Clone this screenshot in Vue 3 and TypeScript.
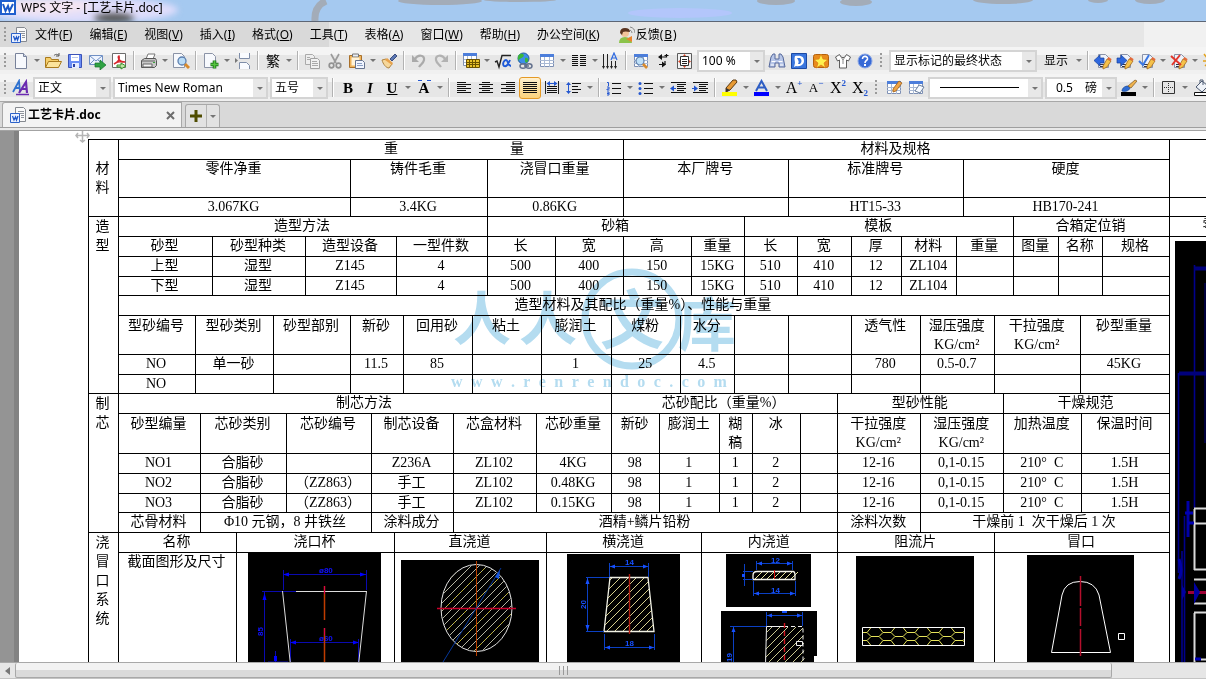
<script setup lang="ts">
import { ref } from 'vue'

interface Tool {
  kind: 'icon' | 'drop' | 'sep' | 'grip' | 'combo' | 'text'
  name?: string
  icon?: string
  text?: string
  cls?: string
  options?: string[]
}
interface Cell { text: string; span: number; rows?: number; cls?: string; art?: string[] }
interface Row { height: number; cells: Cell[] }

const icon = (name: string, key: string, cls = ''): Tool => ({ kind: 'icon', name, icon: key, cls })
const text = (name: string, value: string, cls = ''): Tool => ({ kind: 'text', name, text: value, cls })
const combo = (name: string, cls: string, ...options: string[]): Tool => ({ kind: 'combo', name, cls, options })
const drop: Tool = { kind: 'drop', name: '更多选项' }
const sep: Tool = { kind: 'sep' }
const grip: Tool = { kind: 'grip' }

const lines = (rows: [number, number][], y0: number, step: number, color = '#111') =>
  rows.map(([a, b], i) => `<path stroke="${color}" d="M${a} ${y0 + i * step}.5H${b}"/>`).join('')
const sheet = '<path d="M3.5 1.5h8l3 3v12h-11z" fill="#f7f9fd" stroke="#78829a"/><path d="M11.500 1.500v3h3" fill="#cdd6e8" stroke="#78829a"/>'
const gridArt = '<path d="M2.500 2.500h13v12h-13z" fill="#fff" stroke="#7e90b4"/><path d="M2 2h14v3H2z" fill="#4c7edb"/><path d="M2 8.500h14M2 11.500h14M6.500 5v10M11.500 5v10" stroke="#a9b9d4"/>'
const pencilNote = '<path d="M4.500 2.500h7l3 3v10h-10z" fill="#eef2fa" stroke="#8a93a8"/><path d="M6 12.500h5M6 14.500h4" stroke="#334"/><path d="M9 14l4-7 4 2-4 6-4 2z" fill="#f5c14a" stroke="#a46b1c" stroke-width=".8"/><path d="M13 7l4 2 .5-2-3-2z" fill="#e56a3a"/>'

const icons: Record<string, string> = {
  doc: '<path d="M6.500 1.500h8l2 2v12h-10z" fill="#fafafa" stroke="#85898f"/><path d="M9 5.500h6M9 7.500h6M12 9.500h3M12 11.500h3" stroke="#8f949c"/><path d="M1.500 7.500h9v9h-9z" fill="#eaf1ff" stroke="#2c62c9"/><path d="M3.500 10l1.500 4 1.500-3 1 3 1.500-4" fill="none" stroke="#1f57c8" stroke-width="1.300"/>',
  fresh: sheet,
  open: '<path d="M1.500 15V5.500h5l1 2h7V15z" fill="#f6cf6b" stroke="#a97a1d"/><path d="M1.500 15.500l3-6h13l-3 6z" fill="#fbe39b" stroke="#a97a1d"/><path d="M10 3.500c2-2 4-1 5 0M15 1v3h-3" fill="none" stroke="#555"/>',
  save: '<path d="M2.500 2.500h13v13h-13z" fill="#6a8df5" stroke="#3b52b8"/><path d="M5 3h8v6H5z" fill="#fff"/><path d="M6 5.500h6" stroke="#b8c6ea"/><path d="M6 11h7v5H6z" fill="#e6ecff"/><path d="M7 12h2v3H7z" fill="#2a3f9f"/>',
  mail: '<path d="M1.500 3.500h13v9h-13z" fill="#eef4ff" stroke="#6f8fc4"/><path d="M2 4l6 5 6-5M2 12l4-4M14 12l-4-4" fill="none" stroke="#6f8fc4"/><path d="M7 11h5V8l6 5-6 5v-3H7z" fill="#2fa243" stroke="#16722a" stroke-width=".7"/>',
  pdf: '<path d="M2.500 1.500h13v14h-13z" fill="#fff" stroke="#6c6c6c"/><path d="M4 12c4-2 6-5 5-8-2 0 0 7 6 6-4-1-8 0-11 2z" fill="none" stroke="#d8262c" stroke-width="1.500"/><path d="M7 13h4v-2l5 3-5 3v-2H7z" fill="#bfe6a5" stroke="#398b2b"/>',
  print: '<path d="M6 7l2-5h7l-2 5z" fill="#fff" stroke="#777"/><path d="M1.500 8.500l3-2h11l1 2v5l-2 2h-13z" fill="#c6c6c6" stroke="#555"/><path d="M2 9h13M3 12h9v3H3z" fill="#f4f4f4" stroke="#666"/><path d="M13 10h2v1h-2z" fill="#3aa23a"/>',
  preview: '<path d="M1.500 1.500h8l3 3v11h-11z" fill="#f7f9fd" stroke="#8b93a6"/><circle cx="10" cy="9" r="4" fill="#b9dcf7" stroke="#5d7fae" stroke-width="1.300"/><path d="M13 12l4 4" stroke="#d88a2c" stroke-width="3"/>',
  plus: '<path d="M2.500 1.500h8l3 3v11h-11z" fill="#f7f9fd" stroke="#8b93a6"/><path d="M8.500 12.500h8M12.500 8.500v8" stroke="#1f7d1c" stroke-width="3.600"/><path d="M9 12.500h7M12.500 9v7" stroke="#55c33f" stroke-width="1.600"/>',
  brk: '<path d="M5.500 1v5.500h10V1M5.500 17v-6.500h7l3 3V17" fill="#f9fbff" stroke="#7e8da8"/><path d="M1 6l3 2.500L1 11z" fill="#777"/>',
  copy: '<path d="M1.500 2.500h7l2 2v8h-9z" fill="#eee" stroke="#aaa"/><path d="M6.500 6.500h7l2 2v8h-9z" fill="#f2f2f2" stroke="#a2a2a2"/><path d="M8 9.500h5M8 11.500h6M8 13.500h6M3 5.500h3M3 7.500h3" stroke="#aaa"/>',
  cut: '<path d="M5 2l5 9M13 2l-5 9" stroke="#9b9b9b" stroke-width="1.700"/><circle cx="5.500" cy="13.500" r="2.300" fill="none" stroke="#929292" stroke-width="1.700"/><circle cx="12.500" cy="13.500" r="2.300" fill="none" stroke="#929292" stroke-width="1.700"/>',
  paste: '<path d="M1.500 3.500h12v12h-12z" fill="#efb45c" stroke="#a9702a"/><path d="M4.500 2h6v3h-6z" fill="#e9edf4" stroke="#777"/><path d="M3.500 5.500h8v8h-8z" fill="#fff3d9"/><path d="M7.500 8.500h7l2 2v6h-9z" fill="#f2f6ff" stroke="#66748f"/><path d="M9 11.500h5M9 13.500h6" stroke="#8ca0c4"/>',
  brush: '<path d="M10 7l5-5 2 2-5 5z" fill="#5b77b4" stroke="#3c4f80"/><path d="M2 8l4-1 6 5-3 4c-3 0-6-4-7-8z" fill="#f6d79a" stroke="#ad8444"/><path d="M7 6l6 5-1 2-7-5z" fill="#e8a24b"/>',
  undo: '<path d="M5 7c3-5 10-4 9 1-.5 3-3 4-5 7" fill="none" stroke="#aaa" stroke-width="2.200"/><path d="M2 3v7h7z" fill="#aaa"/>',
  redo: '<path d="M13 7C10 2 3 3 4 8c.5 3 3 4 5 7" fill="none" stroke="#b2b2b2" stroke-width="2.200"/><path d="M16 3v7H9z" fill="#b2b2b2"/>',
  tgreen: '<path d="M1.500 1.500h13v12h-13z" fill="#fff" stroke="#7e90b4"/><path d="M1 1h14v3H1z" fill="#4c7edb"/><path d="M2 7.500h12M2 10.500h12M5.500 4v9M9.500 4v9" stroke="#a9b9d4"/><path d="M4.500 7.500h13v8h-13z" fill="#e9c22b" stroke="#6b5200"/><path d="M5 10.500h12M5 12.500h12M7.500 8v7M10.500 8v7M13.500 8v7" stroke="#6b5200"/>',
  sqrt: '<path d="M1 10l2-1 2 6L8 3.500h9" fill="none" stroke="#222" stroke-width="1.400"/><path d="M16 8c-2 5-4 7-6 6-2-2 0-6 2-6s2 6 5 6" fill="none" stroke="#1d59d8" stroke-width="1.900"/>',
  globe: '<circle cx="7.500" cy="6.500" r="5.500" fill="#3d8ee8" stroke="#1d5aa0"/><path d="M4 2c3-1 5 1 3 3s-4 1-4 4c-2-3-1-6 1-7zM9 6c2-1 4 1 3 3s-3 2-3 0z" fill="#3ab53a"/><path d="M4 14c0-3 6-3 6 0s-6 3-6 0M10 14c0-3 6-3 6 0s-6 3-6 0M8 14h5" fill="none" stroke="#63718d" stroke-width="1.500"/>',
  grid: gridArt,
  columns: lines([[2, 8], [2, 8], [2, 8], [2, 8], [2, 8], [2, 8]], 3, 2) + lines([[10, 16], [10, 16], [10, 16], [10, 16], [10, 16], [10, 16]], 3, 2),
  textdir: '<path d="M1.500 2v14M5.500 2v14M9.500 9v7M13.500 9v7" stroke="#222"/><path d="M0 14h3l-1.500 3zM4 14h3l-1.500 3zM8 14h3l-1.500 3zM12 14h3l-1.500 3z" fill="#222"/><path d="M9 8l3-7 3 7M10 6h4" fill="none" stroke="#2f6ae0" stroke-width="1.200"/>',
  find: gridArt + '<circle cx="8" cy="9" r="4" fill="#bfe0f8" stroke="#5d7fae" stroke-width="1.200"/><path d="M11 12l4 4" stroke="#d88a2c" stroke-width="2.600"/>',
  para: '<path d="M12.500 2v3h-6M5 12.500h6V9" fill="none" stroke="#111" stroke-width="1.200"/><path d="M8 2v6L4 5zM8 9.500v6l4-3zM10.500 3h4v1h-4z" fill="#111"/>',
  page: '<path d="M1.500 1.500h14v15h-14z" fill="#f3f3f3" stroke="#5c5c5c"/><path d="M4.500 4.500h8v9h-8z" fill="#fff" stroke="#333"/><path d="M6 7.500h5M6 9.500h5M6 11.500h5" stroke="#222"/><path d="M7 4l1.500-2L10 4zM7 14l1.500 2 1.500-2zM4 8L2 9.500 4 11zM13 8l2 1.500L13 11z" fill="#d84a2c"/>',
  bino: '<path d="M3 5l2-3h2v5h4V2h2l2 3 2 10h-6v-4H7v4H1z" fill="#b7c6e8" stroke="#56699b"/><path d="M3.500 9.500h4M10.500 9.500h4M3 13h3M12 13h3" stroke="#fff"/>',
  dee: '<path d="M1.500 1.500h15v15h-15z" fill="#3a76de" stroke="#1c4aa4"/><path d="M5 4c8-1 9 2 9 5s-3 6-8 5l-2 1 1-4c0-3-1-3 0-7z" fill="#fff"/><path d="M7 6h3c2 2 2 4 0 6H8c1-2 1-3-1-6z" fill="#3a76de"/>',
  star: '<rect x="1.500" y="2.500" width="15" height="13" rx="2" fill="#e98b1d" stroke="#b3610c"/><path d="M9 2l2 5 5 .5-4 3.500 1.500 5L9 13l-4.500 3L6 11 2 7.500 7 7z" fill="#fff04d" stroke="#d87a12" stroke-width=".7"/>',
  shirt: '<path d="M5.500 2.500L1.500 5l2 4 2-1v8h7V8l2 1 2-4-4-2.500-2 3h-3z" fill="#fff" stroke="#5e5e5e"/><path d="M5.500 2.500L9 8l3.500-5.500M9 8v4" fill="none" stroke="#8a8a8a"/>',
  help: '<circle cx="9" cy="9" r="7" fill="#3769d6" stroke="#8ba7e6"/><path d="M6.500 7c0-4 5.500-3 5 0-.3 1.500-2.500 1.500-2.500 4" fill="none" stroke="#fff" stroke-width="1.600"/><path d="M8 12h2v2H8z" fill="#fff"/>',
  prev: pencilNote + '<path d="M6 3v3h4v5H6v3L0 8.500z" fill="#2e67de" stroke="#16409c" stroke-width=".7"/>',
  next: pencilNote + '<path d="M5 3v3H1v5h4v3l6-5.500z" fill="#2e67de" stroke="#16409c" stroke-width=".7"/>',
  accept: pencilNote + '<path d="M1 9l4 4 6-10" fill="none" stroke="#3b78e4" stroke-width="2"/>',
  reject: pencilNote + '<path d="M1 4l10 9M10 3L2 13" stroke="#e3362c" stroke-width="2"/>',
  spark: '<path d="M2 2l4 5M9 1v5M1 9h5M3 14l3-3" stroke="#e3a21c" stroke-width="1.500"/><path d="M7 7h10v9H7z" fill="#f3c866" stroke="#a46b1c"/>',
  styles: '<path d="M1 13L7 2l1 11M3 9h5" fill="none" stroke="#2f72cf" stroke-width="1.800"/><path d="M7 14L14 3l1 11M10 10h5" fill="none" stroke="#6b2bb1" stroke-width="2.200"/><path d="M4 15.500h13" stroke="#6b2bb1" stroke-width="1.500"/>',
  left: lines([[2, 11], [2, 16], [2, 11], [2, 16], [2, 11], [2, 16]], 3, 2),
  center: lines([[5, 13], [2, 16], [5, 13], [2, 16], [5, 13], [2, 16]], 3, 2),
  right: lines([[7, 16], [2, 16], [7, 16], [2, 16], [7, 16], [2, 16]], 3, 2),
  justify: lines([[2, 16], [2, 16], [2, 16], [2, 16], [2, 16], [2, 16]], 3, 2),
  spread: lines([[4, 14], [4, 14], [4, 14], [4, 14]], 7, 2) + '<path d="M2.500 2v13M15.500 2v13" stroke="#222"/><path d="M4 4.500h10" stroke="#2457d0"/><path d="M7 2v5L3.500 4.500zM11 2v5l3.500-2.500z" fill="#2457d0"/>',
  spacing: lines([[7, 16], [7, 13], [7, 16], [7, 13]], 4, 3) + '<path d="M3.500 5v8" stroke="#2457d0"/><path d="M1 6l2.500-3L6 6zM1 12l2.500 3L6 12z" fill="#2457d0"/>',
  numbers: lines([[7, 16], [7, 16], [7, 16]], 4, 5) + '<path d="M2 3.500h1.500V7M2 8h2v2H2v1h2.500M2 13h2v3H2M2 14.500h2" fill="none" stroke="#2457d0"/>',
  bullets: lines([[7, 16], [7, 16], [7, 16]], 4, 5) + '<circle cx="3" cy="4.500" r="1.500" fill="#2457d0"/><circle cx="3" cy="9.500" r="1.500" fill="#2457d0"/><circle cx="3" cy="14.500" r="1.500" fill="#2457d0"/>',
  outdent: lines([[2, 17], [8, 17], [8, 15], [8, 17], [8, 15], [2, 17]], 3, 2) + '<path d="M2 9.500h5" stroke="#2457d0"/><path d="M5 6.500v6l-4-3z" fill="#2457d0"/>',
  indent: lines([[2, 17], [8, 17], [8, 15], [8, 17], [8, 15], [2, 17]], 3, 2) + '<path d="M1 9.500h4" stroke="#2457d0"/><path d="M3 6.500v6l4-3z" fill="#2457d0"/>',
  marker: '<path d="M5 9l7-8h3l1 2-7 8-4 2z" fill="#e79a34" stroke="#5c3a12"/><path d="M5 9l4 2-4 2z" fill="#333"/><path d="M1 13h15v4H1z" fill="#ffff00"/>',
  color: '<path d="M3 12L8.500 2 14 12M5 8.500h7" fill="none" stroke="#2e5ec4" stroke-width="2"/><path d="M1 13h15v4H1z" fill="#0000ff"/>',
  drawtable: gridArt + '<path d="M8 10l6-8 3 2-6 8-3 1z" fill="#f0a445" stroke="#9c5d17" stroke-width=".8"/>',
  erase: gridArt + '<path d="M8 12l4-6 5 2-4 6z" fill="#f7fbff" stroke="#6c7f9e"/>',
  pen: '<path d="M2 12c0-3 3-5 6-5l2 2c-1 3-5 4-8 3z" fill="#2e6cd3" stroke="#194690" stroke-width=".7"/><path d="M8 7l7-6 2 1-6 7z" fill="#f0b34d" stroke="#7a5420" stroke-width=".7"/><path d="M1 13h15v4H1z" fill="#000"/>',
  borders: '<path d="M2.500 2.500h12v12h-12z" fill="none" stroke="#333"/><path d="M8.500 4v9M4 8.500h9" stroke="#333" stroke-dasharray="1 1"/>',
  bucket: '<path d="M4 8l6-6 6 5-6 6z" fill="#eef2f8" stroke="#4d5a72"/><path d="M8 4V1h3v5" fill="none" stroke="#4d5a72"/><path d="M2.500 13.500h14v3h-14z" fill="#fff" stroke="#111"/>'
}

const standard: Tool[] = [
  grip, icon('新建', 'fresh'), drop, icon('打开', 'open'), icon('保存', 'save'), icon('发送邮件', 'mail'), icon('输出为 PDF', 'pdf'), sep,
  icon('打印', 'print'), drop, icon('打印预览', 'preview'), sep, icon('新建页', 'plus'), drop, icon('分页', 'brk'), sep,
  text('繁体转换', '繁', 'fan'), drop, sep, icon('复制', 'copy'), icon('剪切', 'cut'), icon('粘贴', 'paste'), drop, icon('格式刷', 'brush'), sep,
  icon('撤销', 'undo'), icon('恢复', 'redo'), sep, icon('表格', 'tgreen'), drop, icon('公式', 'sqrt'), icon('超链接', 'globe'), icon('插入表格', 'grid'), drop,
  icon('分栏', 'columns'), drop, icon('文字方向', 'textdir'), sep, icon('查找表格', 'find'), icon('段落标记', 'para'), icon('页面', 'page'),
  combo('显示比例', 'w70', '100 %', '75 %', '150 %'), icon('查找', 'bino'), icon('文档', 'dee'), icon('收藏', 'star'), icon('皮肤', 'shirt'), icon('帮助', 'help'),
  { ...grip, cls: 'wide' }, combo('修订显示', 'w150', '显示标记的最终状态', '最终状态', '原始状态'), text('显示', '显示', 'show'), drop, sep,
  icon('前一处修订', 'prev'), icon('后一处修订', 'next'), icon('接受修订', 'accept'), drop, icon('拒绝修订', 'reject'), drop, icon('新批注', 'spark')
]
const formatting: Tool[] = [
  grip, icon('样式', 'styles'), combo('样式名', 'w80', '正文', '标题 1'), combo('字体', 'w157', 'Times New Roman', 'Arial'), combo('字号', 'w60', '五号', '四号'), sep,
  text('加粗', 'B', 'bold'), text('倾斜', 'I', 'ital'), text('下划线', 'U', 'under'), drop, text('字符间距', 'A', 'spaced'), drop, sep,
  icon('左对齐', 'left'), icon('居中', 'center'), icon('右对齐', 'right'), icon('两端对齐', 'justify', 'active'), icon('分散对齐', 'spread'), icon('行距', 'spacing'), drop, sep,
  icon('编号', 'numbers'), drop, icon('项目符号', 'bullets'), drop, icon('减少缩进', 'outdent'), icon('增加缩进', 'indent'), sep,
  icon('突出显示', 'marker'), drop, icon('字体颜色', 'color'), drop, text('增大字号', 'A<sup>+</sup>', 'serif'), text('减小字号', 'A<sup>−</sup>', 'serif small'),
  text('上标', 'X<sup>2</sup>', 'serif'), text('下标', 'X<sub>2</sub>', 'serif'), { ...grip, cls: 'wide' }, icon('绘制表格', 'drawtable'), icon('擦除', 'erase'),
  combo('线型', 'w117 line', ''), combo('线宽', 'w74 right', '0.5\u3000磅', '1\u3000磅'), icon('边框颜色', 'pen'), drop, sep, icon('边框', 'borders'), drop, icon('底纹', 'bucket')
]
const menus: [string, string][] = [['文件', 'F'], ['编辑', 'E'], ['视图', 'V'], ['插入', 'I'], ['格式', 'O'], ['工具', 'T'], ['表格', 'A'], ['窗口', 'W'], ['帮助', 'H'], ['办公空间', 'K']]

const LEFT = 88, BODY = 118, RIGHT = 1168, END = 1290
const eMat = [350, 487, 623, 788, 963, RIGHT]
const eMold = [212, 305, 396, 487, 555, 623, 691, 744, 797, 851, 901, 956, 1013, 1058, 1102, RIGHT]
const eSand = [195, 273, 350, 403, 472, 541, 611, 680, 734, 788, 851, 920, 994, 1080, RIGHT]
const eCore = [200, 286, 371, 453, 536, 611, 659, 719, 752, 800, 837, 920, 1003, 1081, RIGHT]
const eGate = [236, 394, 546, 701, 837, 994, RIGHT]
const edges = [...new Set([LEFT, BODY, 1003, END, ...eMat, ...eMold, ...eSand, ...eCore, ...eGate])].sort((a, b) => a - b)
const columns = edges.slice(1).map((e, i) => e - edges[i])
const between = (a: number, b: number) => edges.indexOf(b) - edges.indexOf(a)

const side = (label: string, rows: number, cls = ''): Cell => ({ text: label.split('').join('\n'), span: 1, rows, cls: 'side ' + cls })
const last = (rows: number, label = '', cls = ''): Cell => ({ text: label, span: 1, rows, cls: 'last ' + cls })
function band(height: number, ends: number[], labels: string, head?: Cell, tail?: Cell, cls = ''): Row {
  const list = labels.split('|')
  const cells = ends.map((end, i): Cell => ({ text: (list[i] ?? '').replace('/n', '\n'), span: between(i ? ends[i - 1] : BODY, end), cls }))
  return { height, cells: [...(head ? [head] : []), ...cells, ...(tail ? [tail] : [])] }
}
const gap = '\u3000'
const rows: Row[] = [
  band(20, [623, RIGHT], `${gap.repeat(12)}重${gap.repeat(8)}量|材料及规格`, side('材料', 3, 'middle'), last(2)),
  band(38, eMat, '零件净重|铸件毛重|浇冒口重量|本厂牌号|标准牌号|硬度'),
  band(19, eMat, '3.067KG|3.4KG|0.86KG||HT15-33|HB170-241', undefined, last(1)),
  band(20, [487, 744, 1013, RIGHT], '造型方法|砂箱|模板|合箱定位销', side('造型', 8), last(1, '零件', 'label')),
  band(20, eMold, '砂型|砂型种类|造型设备|一型件数|长|宽|高|重量|长|宽|厚|材料|重量|图量|名称|规格', undefined, { text: '', span: 1, rows: 15, cls: 'last', art: ['part'] }),
  band(20, eMold, '上型|湿型|Z145|4|500|400|150|15KG|510|410|12|ZL104'),
  band(19, eMold, '下型|湿型|Z145|4|500|400|150|15KG|510|410|12|ZL104'),
  band(20, [RIGHT], '造型材料及其配比（重量%）、性能与重量'),
  band(39, eSand, '型砂编号|型砂类别|砂型部别|新砂|回用砂|粘土|膨润土|煤粉|水分|||透气性|湿压强度/nKG/cm²|干拉强度/nKG/cm²|砂型重量', undefined, undefined, 'tall'),
  band(20, eSand, 'NO|单一砂||11.5|85||1|25|4.5|||780|0.5-0.7||45KG'),
  band(19, eSand, 'NO'),
  band(20, [611, 837, 1003, RIGHT], '制芯方法|芯砂配比（重量%）|型砂性能|干燥规范', side('制芯', 6)),
  band(40, eCore, '砂型编量|芯砂类别|芯砂编号|制芯设备|芯盒材料|芯砂重量|新砂|膨润土|糊/n稿|冰||干拉强度/nKG/cm²|湿压强度/nKG/cm²|加热温度|保温时间', undefined, undefined, 'tall'),
  band(20, eCore, 'NO1|合脂砂||Z236A|ZL102|4KG|98|1|1|2||12-16|0,1-0.15|210°\u2002C|1.5H'),
  band(20, eCore, 'NO2|合脂砂|（ZZ863）|手工|ZL102|0.48KG|98|1|1|2||12-16|0,1-0.15|210°\u2002C|1.5H'),
  band(19, eCore, 'NO3|合脂砂|（ZZ863）|手工|ZL102|0.15KG|98|1|1|2||12-16|0,1-0.15|210°\u2002C|1.5H'),
  band(20, [200, 371, 453, 837, 920, RIGHT], '芯骨材料|Φ10 元钢，8 井铁丝|涂料成分|酒精+鳞片铅粉|涂料次数|干燥前 1  次干燥后 1 次'),
  band(20, eGate, '名称|浇口杯|直浇道|横浇道|内浇道|阻流片|冒口', side('浇冒口系统', 2)),
  band(120, eGate, '截面图形及尺寸')
]
const sections = [['cup'], ['sprue'], ['runner'], ['ingateA', 'ingateB'], ['choke'], ['riser']]
sections.forEach((art, i) => { rows[rows.length - 1].cells[i + 1].art = art })

const hatch = (x0: number, x1: number, y0: number, y1: number, step: number) => {
  let out = ''
  for (let c = x0 + y0; c < x1 + y1; c += step) out += `M${c - y1} ${y1}L${c - y0} ${y0}`
  return out
}
const honey = () => {
  let out = ''
  for (let x = -9; x < 110; x += 24) {
    out += `M${x} 80.500h8l4-4h8l4 4M${x + 8} 80.500l4 4h8l4-4M${x + 12} 76.500l-4-5M${x + 20} 76.500l4-5M${x + 12} 84.500l-4 5M${x + 20} 84.500l4 5`
  }
  return out
}
const arts: Record<string, { w: number; h: number; body: string }> = {
  cup: { w: 133, h: 112, body: '<path d="M35.500 17v20M118.500 17v20M35 21.500h83M14 38.500h36M16.500 38v74M42.500 86v26M110.500 86v26M42 89.500h69M27.500 98v14M20 109h20" stroke="#0a0ab0" fill="none"/><path d="M35 21.500l6-2v4zM118 21.500l-6-2v4zM16.500 40l-2 7h4zM42 89.500l6-2v4zM111 89.500l-6-2v4zM26 103h3v5h-3z" fill="#0000ff"/><g fill="#1111ff" font-size="8" font-weight="bold" font-family="Liberation Sans"><text x="71" y="20">ø80</text><text x="71" y="88">ø60</text><text transform="translate(15 83) rotate(-90)">85</text></g><path d="M48 38.500h71M34.500 38l8 74M118.500 38l-8 74" stroke="#ddd" fill="none"/><path d="M76.500 33v34M76.500 75v37" stroke="#bf3c00" stroke-width="1.500"/><path d="M76.500 33v8M76.500 75v7" stroke="#e00050"/>' },
  sprue: { w: 138, h: 104, body: `<clipPath id="disk"><ellipse cx="75.500" cy="48" rx="35" ry="43"/></clipPath><g clip-path="url(#disk)"><path d="${hatch(40, 111, 4, 92, 8)}" stroke="#b3b3a0" fill="none"/><path d="${hatch(40, 111, 4, 92, 24)}" stroke="#b8ac20" stroke-dasharray="3 2" fill="none"/></g><ellipse cx="75.500" cy="48" rx="35.500" ry="43.500" fill="none" stroke="#e4e4e4"/><path d="M75.500 1v95" stroke="#b94000"/><path d="M36 48.500h79" stroke="#c8002b" stroke-width="1.400"/><path d="M100 8L42 102" stroke="#06379a"/><path d="M94 17l5-7-1 9z" fill="#1757e0"/>` },
  runner: { w: 113, h: 110, body: `<clipPath id="trap"><path d="M43 24h38l6 53H37z"/></clipPath><path clip-path="url(#trap)" d="${hatch(37, 88, 24, 77, 8)}" stroke="#d6cf8d" fill="none"/><path d="M43 23.500h38l6 54H37z" fill="none" stroke="#f0f0e4" stroke-width="1.300"/><path d="M62.500 20v60" stroke="#b01c10" stroke-width="1.400"/><path d="M42.500 9v14M81.500 9v14M42 12.500h39M19 23.500h23M20.500 24v53M19 77.500h18M37.500 80v16M87.500 80v16M37 93.500h50" stroke="#0b40c4" fill="none"/><path d="M43 12.500l5-2v4zM81 12.500l-5-2v4zM20.500 24l-2 6h4zM20.500 77l-2-6h4zM38 93.500l5-2v4zM87 93.500l-5-2v4z" fill="#1650ff"/><g fill="#1650ff" font-size="8" font-family="Liberation Sans" font-weight="bold"><text x="58" y="11">14</text><text x="58" y="92">18</text><text transform="translate(19 55) rotate(-90)">20</text></g>` },
  ingateA: { w: 85, h: 53, body: `<path d="${hatch(36, 68, 18, 25, 6)}" stroke="#e6e39a" fill="none"/><path d="M31 17.500h36q2 0 2 4v4H27v-4q0-4 4-4z" fill="none" stroke="#f4f4ec" stroke-width="1.300"/><path d="M48.500 16v9" stroke="#d11"/><path d="M30.500 7v9M66.500 7v9M31 9.500h36M18.500 10v22M17 17.500h10M17 25.500h10M27.500 27v15M69.500 27v15M28 39.500h42" stroke="#0b40c4"/><path d="M31 9.500l5-2v4zM66 9.500l-5-2v4zM28 39.500l5-2v4zM69 39.500l-5-2v4zM16 20h3v3h-3z" fill="#1650ff"/><g fill="#1650ff" font-size="8" font-family="Liberation Sans" font-weight="bold"><text x="45" y="9">12</text><text x="45" y="39">14</text></g>` },
  ingateB: { w: 96, h: 54, body: `<clipPath id="gate"><path d="M46 16h36l2 38H44z"/></clipPath><path clip-path="url(#gate)" d="${hatch(44, 84, 15, 54, 8)}" stroke="#c9c890" fill="none"/><path d="M44.500 54l1-38.500h18" stroke="#eee" fill="none"/><path d="M63 15.500h19V54" stroke="#eee" stroke-dasharray="4 3" fill="none"/><path d="M63.500 12v42" stroke="#d01420" stroke-width="1.400" stroke-dasharray="5 3"/><path d="M45.500 1v14M81.500 1v14M46 4.500h36M9 15.500h36M12.500 16v38" stroke="#0b40c4"/><path d="M46 4.500l5-2v4zM81 4.500l-5-2v4zM12.500 16l-2 5h4zM61 0h5v2h-5z" fill="#1650ff"/><g fill="#1650ff" font-size="8" font-family="Liberation Sans" font-weight="bold"><text transform="translate(11 51) rotate(-90)">19</text></g><path d="M75.500 30.500h6v4h-6z" fill="none" stroke="#eee"/><path d="M93 45h3v9h-3z" fill="#fff"/>` },
  choke: { w: 118, h: 108, body: `<clipPath id="comb"><path d="M6 71h103v19H6z"/></clipPath><path clip-path="url(#comb)" d="${honey()}" stroke="#e6e35a" fill="none"/><path d="M6.500 71.500h102v18H6.500z" fill="none" stroke="#fff"/>` },
  riser: { w: 107, h: 109, body: '<path d="M24.500 97.500L35 40q3-13.500 18-13.500T72 40l11.500 57.500z" fill="none" stroke="#fff"/><path d="M53.500 21v30M53.500 53v18M53.500 74v27" stroke="#b50f2c" stroke-width="1.500"/><path d="M91.500 78.500h6v6h-6z" fill="none" stroke="#fff"/>' },
  part: { w: 105, h: 424, body: '<path d="M19.500 24v243M3.500 132v200M7 310v114M9.500 275v149" stroke="#00008c" stroke-width="1.600"/><path d="M19 27.500h86M4 132.500h101" stroke="#00007c" stroke-width="4"/><path d="M30 42v160" stroke="#000078"/><path d="M4 318q4 12 0 20M13 260v36" fill="none" stroke="#0000a8" stroke-width="3"/><path d="M19.500 268v61M19.500 372v49M19 267.500h86M19 282.500h86M19 328.500h86M19 338.500h86M19 362.500h86M19 371.500h86M26 418.500h79" stroke="#d9d9d9" stroke-width="2" fill="none"/><path d="M13 351.500h30" stroke="#9d0035" stroke-width="3"/><path d="M7 344l4 7-4 8zM19 341l6 10-6 12z" fill="#0000a0"/><path d="M10 272h8M13 282h6M20 418h6" stroke="#0000b4" stroke-width="3"/>' }
}
const url = 'www.renrendoc.com'.split('')
const tab = ref('工艺卡片.doc')
</script>

<template>
  <div class="app">
    <header class="title">
      <svg class="blots" width="1206" height="21" aria-hidden="true">
        <g class="soft">
          <ellipse cx="82" cy="10" rx="96" ry="13" fill="#dfddfb" />
          <ellipse cx="42" cy="6" rx="50" ry="8" fill="#f4e6f2" />
          <ellipse cx="114" cy="18" rx="20" ry="5" fill="#555" />
        </g>
        <path d="M315 21q-1-15 11-20" fill="none" stroke="#a3acb8" stroke-width="7" />
        <g fill="#a3acb8">
          <ellipse cx="440" cy="1" rx="42" ry="4" /><ellipse cx="520" cy="0" rx="36" ry="2" /><ellipse cx="776" cy="1" rx="19" ry="4" />
          <ellipse cx="856" cy="2" rx="16" ry="4" /><ellipse cx="1003" cy="0" rx="30" ry="4" /><ellipse cx="1098" cy="0" rx="10" ry="3" /><ellipse cx="1150" cy="0" rx="15" ry="4" />
        </g>
        <ellipse cx="680" cy="13" rx="52" ry="5" fill="#b3c6fb" />
      </svg>
      <svg class="logo" width="16" height="16" viewBox="0 0 16 16" aria-hidden="true">
        <path d="M0 0h16v15H0z" fill="#1f5fce" /><path d="M2 2h12v11H2z" fill="#fff" /><path d="M3 4l2.500 7L8 6l1.500 5L13 4" fill="none" stroke="#1a58c8" stroke-width="2" />
      </svg>
      <span class="caption">WPS 文字 - [工艺卡片.doc]</span>
    </header>

    <nav class="menubar" aria-label="菜单">
      <span class="grip"></span>
      <svg class="glyph" viewBox="0 0 18 18" aria-hidden="true" v-html="icons.doc"></svg>
      <button v-for="m in menus" :key="m[1]" type="button">{{ m[0] }}(<u>{{ m[1] }}</u>)</button>
      <button type="button" class="feedback">
        <svg width="16" height="18" viewBox="0 0 16 18" aria-hidden="true">
          <circle cx="6" cy="7" r="4" fill="#f3c49a" /><path d="M1 7q0-5 5-5t5 4q-5-1-7 0l-1 3z" fill="#5a3420" /><path d="M0 17q0-6 6-6t7 6z" fill="#8bc34a" /><path d="M7 13l6-3v6z" fill="#e9842d" /><path d="M11 4q2 1 2 3M11 1q5 1 5 6" fill="none" stroke="#888" />
        </svg>反馈(<u>B</u>)
      </button>
    </nav>

    <div v-for="(bar, b) in [standard, formatting]" :key="b" class="toolbar" role="toolbar">
      <template v-for="(t, i) in bar" :key="i">
        <span v-if="t.kind === 'grip'" class="grip" :class="t.cls"></span>
        <span v-else-if="t.kind === 'sep'" class="sep"></span>
        <span v-else-if="t.kind === 'combo'" class="combo" :class="t.cls">
          <select :aria-label="t.name"><option v-for="o in t.options" :key="o">{{ o }}</option></select>
          <i class="arrow"></i>
        </span>
        <button v-else-if="t.kind === 'drop'" type="button" class="drop" :aria-label="t.name"><i class="arrow"></i></button>
        <button v-else-if="t.kind === 'text'" type="button" class="tool" :class="t.cls" :aria-label="t.name" v-html="t.text"></button>
        <button v-else type="button" class="tool" :class="t.cls" :aria-label="t.name">
          <svg class="glyph" viewBox="0 0 18 18" aria-hidden="true" v-html="icons[t.icon ?? '']"></svg>
        </button>
      </template>
    </div>

    <div class="tabs">
      <div class="tab">
        <svg class="glyph" viewBox="0 0 18 18" aria-hidden="true" v-html="icons.doc"></svg>
        <span class="name">{{ tab }}</span>
        <button type="button" class="close" aria-label="关闭">
          <svg width="9" height="9" viewBox="0 0 9 9"><path d="M1 1l7 7M8 1L1 8" stroke="#6d6d6d" stroke-width="2" /></svg>
        </button>
      </div>
      <div class="add">
        <button type="button" aria-label="新建文档"><svg width="12" height="12" viewBox="0 0 12 12"><path d="M0 6h12M6 0v12" stroke="#4f4c00" stroke-width="3" /></svg></button>
        <button type="button" aria-label="文档列表"><i class="arrow"></i></button>
      </div>
    </div>

    <main class="desk">
      <div class="sheet">
        <svg class="handle" width="15" height="13" viewBox="0 0 15 13" aria-hidden="true"><path d="M7.500 0v12M1 5.500h13M5 10l2.500 2 2.500-2M3 3L1 5.500 3 8M12 3l2 2.500L12 8" fill="none" stroke="#b5b5b5" stroke-width="1.500" /></svg>
        <table>
          <colgroup><col v-for="(w, i) in columns" :key="i" :style="{ width: w + 'px' }" /></colgroup>
          <tbody>
            <tr v-for="(r, i) in rows" :key="i" :style="{ height: r.height + 'px' }">
              <td v-for="(c, j) in r.cells" :key="j" :colspan="c.span" :rowspan="c.rows ?? 1" :class="c.cls">
                <template v-if="c.art"><svg v-for="a in c.art" :key="a" class="art" :class="a" :width="arts[a].w" :height="arts[a].h" v-html="arts[a].body"></svg></template>
                <template v-else>{{ c.text }}</template>
              </td>
            </tr>
          </tbody>
        </table>
        <div class="watermark" aria-hidden="true">
          <svg width="290" height="104" viewBox="0 0 290 104">
            <circle cx="185" cy="51" r="47" fill="none" stroke="currentColor" stroke-width="7" />
            <g class="brush">
              <text x="6" y="72" font-size="58">人</text><text x="72" y="72" font-size="58">人</text>
              <text x="153" y="75" font-size="64">文</text><text x="231" y="78" font-size="58">库</text>
            </g>
          </svg>
          <div class="url"><span v-for="(ch, i) in url" :key="i">{{ ch }}</span></div>
        </div>
      </div>
    </main>

    <footer class="scroll">
      <button type="button" aria-label="向左滚动"><svg width="6" height="8" viewBox="0 0 6 8"><path d="M5 0v8L0 4z" fill="#777" /></svg></button>
      <div class="thumb"><i></i><i></i><i></i></div>
    </footer>
  </div>
</template>

<style>
html, body { margin: 0; overflow: hidden; }
</style>

<style scoped>
.app { display: flex; flex-direction: column; height: 100vh; overflow: hidden; background: #e9e9e9; color: #000; font: 12px/18px "Noto Sans", "Noto Sans CJK SC", sans-serif; }
button { flex: none; margin: 0; padding: 0; border: 0; background: none; color: inherit; font: inherit; display: flex; align-items: center; justify-content: center; }
.title { position: relative; flex: none; height: 21px; background: #a5c9f0; border-bottom: 1px solid #5d6675; overflow: hidden; }
.blots { position: absolute; left: 0; top: 0; }
.soft { filter: blur(3px); }
.logo { position: absolute; left: 0; top: 0; }
.caption { position: absolute; left: 21px; top: 0; line-height: 16px; white-space: nowrap; }
.menubar { flex: none; display: flex; align-items: center; height: 25px; white-space: nowrap; background: linear-gradient(90deg, #d9d9d9 0 27.300%, #e6e6e6 27.300% 94.900%, #f1f1f1 94.900%); }
.menubar button { margin-right: 17px; }
.menubar .glyph { margin-right: 7px; }
.menubar .feedback { gap: 1px; margin-left: 2px; }
.glyph { flex: none; display: block; width: 18px; height: 18px; }
.toolbar { flex: none; display: flex; align-items: center; height: 27px; overflow: hidden; background: linear-gradient(#f4f4f4 0 28%, #e6e6e6 28% 85%, #f0f0f0 85%); }
.grip { flex: none; width: 10px; height: 15px; background: linear-gradient(#9a9a9a, #9a9a9a) 4px 0 / 2px 2px no-repeat, linear-gradient(#9a9a9a, #9a9a9a) 4px 4px / 2px 2px no-repeat, linear-gradient(#9a9a9a, #9a9a9a) 4px 8px / 2px 2px no-repeat, linear-gradient(#9a9a9a, #9a9a9a) 4px 12px / 2px 2px no-repeat; }
.grip.wide { width: 12px; }
.sep { flex: none; width: 8px; height: 19px; background: linear-gradient(90deg, transparent 3px, #b2b2b2 3px 4px, #fff 4px 5px, transparent 5px); }
.tool { width: 22px; height: 22px; }
.active { border: 1px solid #e59a25; border-radius: 3px; background: linear-gradient(#fff0cf, #fbd27c); }
.drop { width: 10px; height: 20px; }
.arrow { display: block; width: 0; height: 0; border: 3px solid transparent; border-bottom: 0; border-top-color: #747474; }
.combo { position: relative; flex: none; box-sizing: border-box; height: 22px; padding: 0 1px; }
.combo select { box-sizing: border-box; width: 100%; height: 22px; margin: 0; padding: 0 16px 0 3px; border: 2px solid #d4d4d4; border-radius: 0; appearance: none; color: #000; font: inherit; font-size: 12px; background: linear-gradient(#fff, #fff) 0 0 / calc(100% - 13px) 100% no-repeat #e8e8e8; }
.combo .arrow { position: absolute; right: 6px; top: 10px; pointer-events: none; }
.combo.right select { padding-left: 9px; }
.combo.line select { background: linear-gradient(#000, #000) 10px 8px / 79px 1px no-repeat, linear-gradient(#fff, #fff) 0 0 / calc(100% - 13px) 100% no-repeat #e8e8e8; }
.w60 { width: 60px; } .w70 { width: 70px; } .w74 { width: 74px; } .w80 { width: 80px; } .w117 { width: 117px; } .w150 { width: 150px; } .w157 { width: 157px; }
.fan { font-size: 14px; }
.show { width: 36px; }
.bold, .ital, .under, .spaced, .serif { font: bold 15px/18px "Liberation Serif", serif; }
.ital { font-style: italic; }
.under { text-decoration: underline; }
.serif { font-size: 16px; line-height: 20px; font-weight: normal; }
.serif.small { font-size: 13px; }
.serif :deep(sup), .serif :deep(sub) { color: #2457d0; font-size: 9px; font-weight: bold; line-height: 0; }
.serif :deep(sup) { align-self: flex-start; margin-top: 6px; }
.serif :deep(sub) { align-self: flex-end; margin-bottom: 6px; }
.spaced { background: linear-gradient(90deg, #2457d0 0 4px, transparent 4px 9px, #2457d0 9px 13px) 5px 3px / 13px 1px no-repeat; }
.tabs { position: relative; flex: none; display: flex; align-items: flex-end; gap: 3px; height: 25px; padding-left: 2px; border-top: 1px solid #a8a8a8; border-bottom: 1px solid #9f9f9f; background: #d9d9d9; }
.tab { display: flex; align-items: center; box-sizing: border-box; width: 180px; height: 25px; padding: 0 6px; border: 1px solid #a8a8a8; border-bottom: 0; border-radius: 3px 0 0 0; background: #f3f3f3; }
.name { flex: 1; margin-left: 1px; font-weight: bold; }
.add { display: flex; box-sizing: border-box; width: 35px; height: 23px; border: 1px solid #a8a8a8; border-bottom: 0; border-radius: 3px 3px 0 0; background: #e2e2e2; }
.add button { width: 12px; }
.add button:first-child { width: 21px; border-right: 1px solid #b4b4b4; }
.desk { flex: 1; min-height: 0; overflow: hidden; padding-left: 19px; border-top: 1px solid #a3a3a3; margin-top: 2px; background: linear-gradient(90deg, #949494 0 14px, #828282 14px 19px, #fff 19px); }
.sheet { position: relative; height: 100%; padding: 8px 0 0 69px; background: #fff; }
.handle { position: absolute; left: 56px; top: -1px; }
table { table-layout: fixed; width: 1px; border-collapse: collapse; font: 14px/18px "Liberation Serif", "Noto Sans CJK SC", serif; }
td { padding: 0 2px 0 0; border: 1px solid #000; text-align: center; vertical-align: top; white-space: pre; }
.side, .tall { line-height: 19px; }
.middle { vertical-align: middle; }
.last { text-align: left; }
.label { padding-left: 33px; }
.art { display: block; margin: 0 auto; background: #000; overflow: hidden; }
.sprue { margin-top: 7px; }
.runner, .ingateA { margin-top: 1px; }
.ingateB { margin-top: 4px; }
.choke { margin-top: 3px; }
.riser { margin-top: 2px; }
.part { margin: 4px 0 0 5px; }
.watermark { position: absolute; left: 428px; top: 137px; width: 290px; color: #b4dcf0; mix-blend-mode: multiply; pointer-events: none; }
.watermark svg { display: block; }
.brush { fill: currentColor; font-family: "Noto Sans CJK SC", sans-serif; font-weight: bold; }
.url { display: flex; justify-content: space-between; width: 276px; margin: 1px 0 0 4px; font: bold 16px/18px "Liberation Serif", serif; }
.scroll { flex: none; display: flex; box-sizing: border-box; height: 17px; border-top: 1px solid #a8a8a8; border-bottom: 1px solid #c4c4c4; background: #e6e6e6; }
.scroll button { width: 15px; }
.thumb { display: flex; align-items: center; justify-content: center; gap: 3px; box-sizing: border-box; width: 91%; border: 1px solid #a8a8a8; border-top: 0; border-radius: 2px; background: linear-gradient(#f2f2f2 0 50%, #dadada 50%); }
.thumb i { width: 1px; height: 9px; background: #999; }
</style>
